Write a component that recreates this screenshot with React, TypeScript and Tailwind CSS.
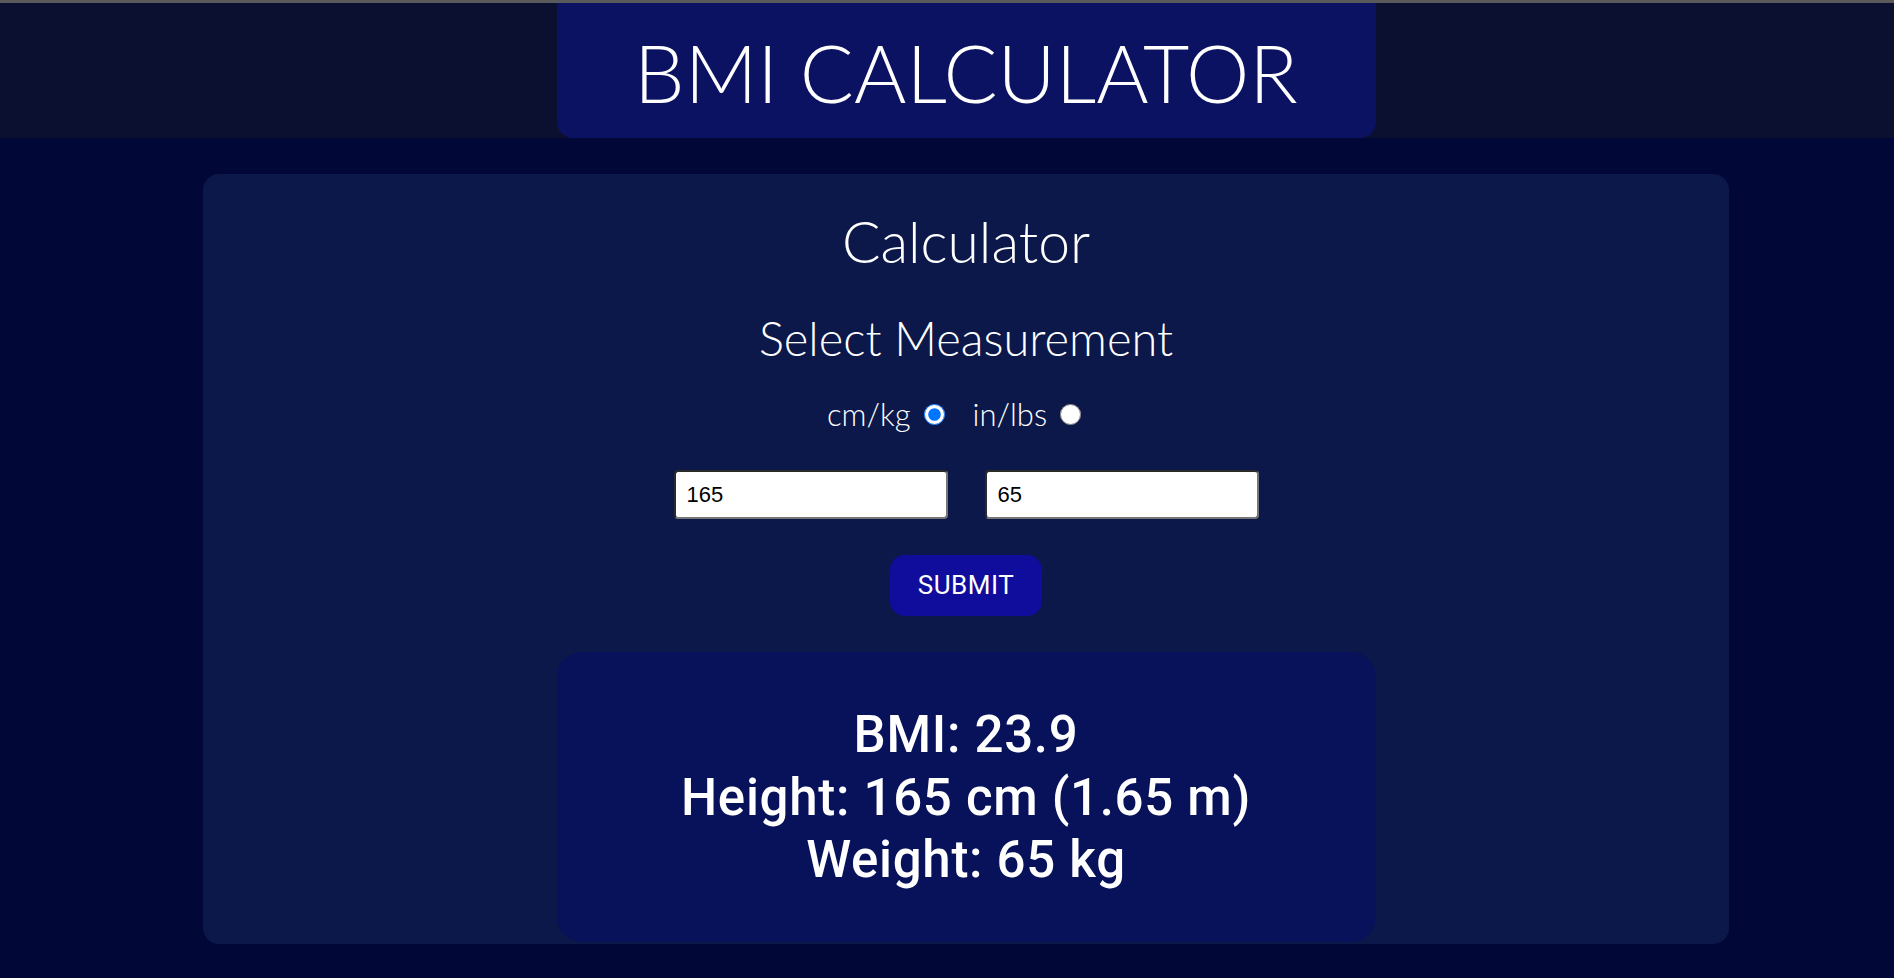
import React, { useState } from "react";

const App = () => {
  const [unit, setUnit] = useState("metric");
  const [height, setHeight] = useState("165");
  const [weight, setWeight] = useState("65");

  return (
    <div className="min-h-[978px] bg-[#010837] font-['Lato','Open_Sans',sans-serif] text-white">
      <div className="h-[3px] bg-[#5a5a5a]" />
      <header className="bg-[#0c1030] pl-[38px]">
        <div className="mx-auto flex h-[135px] w-[819px] items-center justify-center rounded-b-2xl bg-[#0b1261]">
          <h1 className="mt-[3px] text-[80px] font-light leading-none">BMI CALCULATOR</h1>
        </div>
      </header>

      <main className="pl-[38px] pt-[36px]">
        <div className="mx-auto flex w-[1526px] flex-col items-center rounded-2xl bg-[#0b1849] pt-[39px] pb-[2px]">
          <h2 className="text-[57px] font-light leading-none">Calculator</h2>
          <h3 className="mt-[45px] text-[47px] font-light leading-none">Select Measurement</h3>

          <div className="mt-[37px] flex h-[31px] items-center pl-[4px] text-[31px] font-light leading-none">
            <label className="mr-[28px] flex items-center gap-[13px]">
              cm/kg
              <input
                type="radio"
                name="unit"
                checked={unit === "metric"}
                onChange={() => setUnit("metric")}
                className="h-[21px] w-[21px]"
              />
            </label>
            <label className="mr-[28px] flex items-center gap-[13px]">
              in/lbs
              <input
                type="radio"
                name="unit"
                checked={unit === "imperial"}
                onChange={() => setUnit("imperial")}
                className="h-[21px] w-[21px]"
              />
            </label>
          </div>

          <div className="mt-[40px] flex gap-[37px]">
            <input
              value={height}
              onChange={(e) => setHeight(e.target.value)}
              className="h-[49px] w-[274px] rounded-[4px] border-2 border-t-[#2a2a2a] border-l-[#2a2a2a] border-b-[#767676] border-r-[#767676] bg-white px-[11px] font-['Liberation_Sans',Arial,sans-serif] text-[22px] text-black outline-none"
            />
            <input
              value={weight}
              onChange={(e) => setWeight(e.target.value)}
              className="h-[49px] w-[274px] rounded-[4px] border-2 border-t-[#2a2a2a] border-l-[#2a2a2a] border-b-[#767676] border-r-[#767676] bg-white px-[11px] font-['Liberation_Sans',Arial,sans-serif] text-[22px] text-black outline-none"
            />
          </div>

          <button className="mt-[36px] h-[61px] w-[152px] rounded-[15px] bg-[#100c9c] font-['Roboto',sans-serif] text-[26px] tracking-[0.5px] text-white">
            SUBMIT
          </button>

          <div className="mt-[36px] flex h-[290px] w-[819px] flex-col items-center rounded-[25px] bg-[#08125a] pt-[52px] font-['Roboto',sans-serif] text-[51px] font-medium leading-[62.5px] tracking-[0.7px]">
            <div>BMI: 23.9</div>
            <div>Height: 165 cm (1.65 m)</div>
            <div>Weight: 65 kg</div>
          </div>
        </div>
      </main>
    </div>
  );
};

export default App;
